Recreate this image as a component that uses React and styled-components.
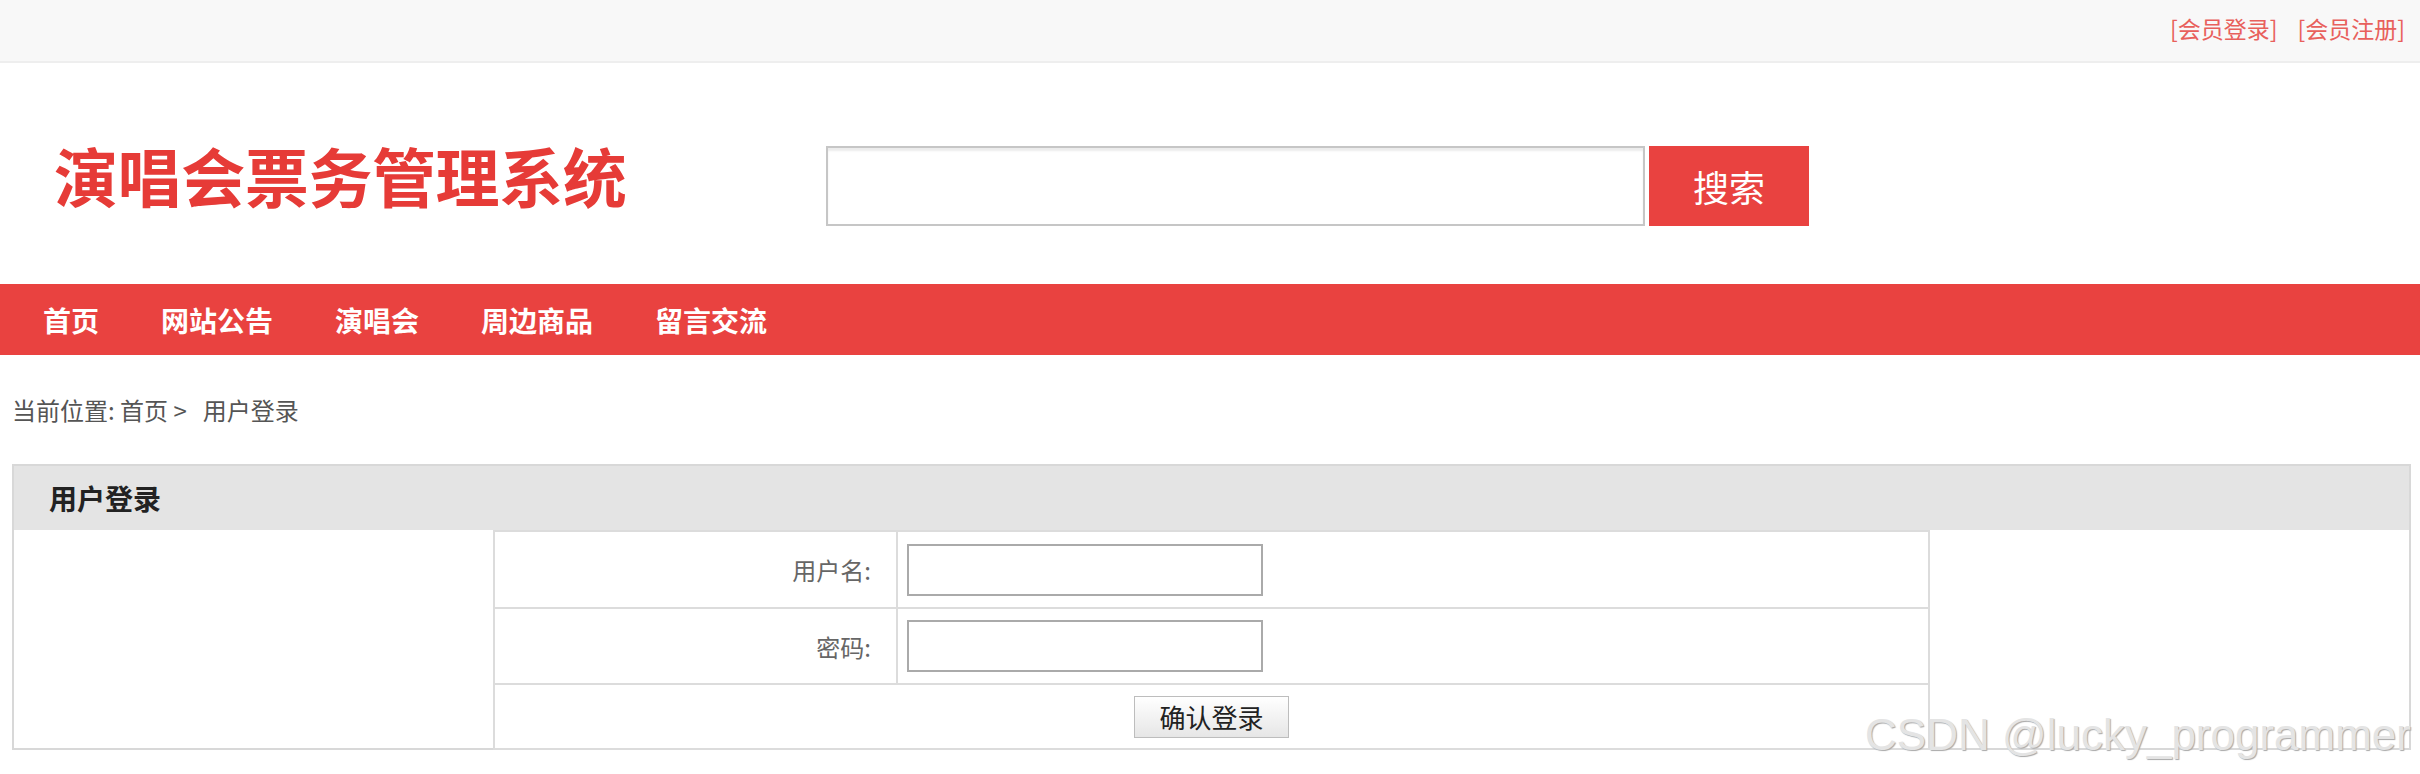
import React from "react";
import styled, { createGlobalStyle } from "styled-components";

const GlobalStyle = createGlobalStyle`
  body {
    margin: 0;
    background: #fff;
    font-family: "Noto Sans CJK SC", "Noto Sans", sans-serif;
  }
`;

const navItems = ["首页", "网站公告", "演唱会", "周边商品", "留言交流"];

const Page = styled.div`
  position: relative;
  min-height: 774px;
`;

const TopBar = styled.div`
  height: 63px;
  padding: 0 15px 4px 0;
  box-sizing: border-box;
  border-bottom: 2px solid #eeeeee;
  background: #f8f8f8;
  display: flex;
  justify-content: flex-end;
  align-items: center;
  gap: 20px;
`;

const TopLink = styled.a`
  font-size: 23px;
  line-height: 1;
  color: #e8605c;
  text-decoration: none;
`;

const Header = styled.header`
  height: 221px;
  display: flex;
  align-items: center;
  padding-left: 54px;
`;

const Title = styled.h1`
  flex: 0 0 772px;
  margin: 0;
  font-size: 64px;
  line-height: 64px;
  letter-spacing: -0.4px;
  font-weight: 700;
  color: #e63b37;
`;

const SearchForm = styled.form`
  display: flex;
  gap: 4px;
  margin-top: 24px;
`;

const SearchInput = styled.input`
  width: 819px;
  height: 80px;
  box-sizing: border-box;
  border: 2px solid #c6c6c6;
  box-shadow: inset 0 3px 2px #ececec;
  outline: none;
`;

const SearchButton = styled.button`
  width: 160px;
  height: 80px;
  border: none;
  background: #e94240;
  color: #fff;
  font-family: inherit;
  font-size: 36px;
`;

const Nav = styled.nav`
  height: 71px;
  background: #e94240;
  display: flex;
  align-items: center;
  padding-left: 12px;
`;

const NavItem = styled.a`
  padding: 0 31px;
  color: #fff;
  font-size: 28px;
  font-weight: 700;
  text-decoration: none;
`;

const Breadcrumb = styled.div`
  padding: 37px 12px 0;
  font-size: 24px;
  line-height: 36px;
  color: #555;
`;

const Panel = styled.section`
  margin: 36px 9px 0 12px;
  border: 2px solid #d8d8d8;
`;

const PanelHeader = styled.div`
  height: 64px;
  display: flex;
  align-items: center;
  padding-left: 35px;
  background: #e4e4e4;
  font-size: 28px;
  font-weight: 700;
  color: #222;
`;

const FormTable = styled.table`
  width: 60%;
  margin: 0 auto -2px;
  border-collapse: collapse;

  td {
    border: 2px solid #dcdcdc;
  }
`;

const Row = styled.tr`
  height: ${(p) => p.$h}px;
`;

const LabelCell = styled.td`
  width: 375px;
  padding-right: 25px;
  text-align: right;
  font-size: 24px;
  color: #666;
`;

const InputCell = styled.td`
  padding-left: 9px;
`;

const FieldInput = styled.input`
  display: block;
  width: 356px;
  height: 52px;
  box-sizing: border-box;
  border: 2px solid #aaaaaa;
`;

const ActionCell = styled.td`
  text-align: center;
`;

const SubmitButton = styled.button`
  height: 42px;
  padding: 0 24px;
  border: 1px solid #bdbdbd;
  background: linear-gradient(#ffffff, #e6e6e6);
  color: #222;
  font-family: inherit;
  font-size: 26px;
  line-height: 1;
  vertical-align: middle;
`;

const Watermark = styled.div`
  position: absolute;
  right: 9px;
  top: 713px;
  font-family: "Liberation Sans", Arial, sans-serif;
  font-size: 44px;
  line-height: 1;
  color: #e4e4e4;
  text-shadow: 1px 1px 1px #a8a8a8;
  pointer-events: none;
`;

export default function App() {
  return (
    <Page>
      <GlobalStyle />
      <TopBar>
        <TopLink href="#">[会员登录]</TopLink>
        <TopLink href="#">[会员注册]</TopLink>
      </TopBar>

      <Header>
        <Title>演唱会票务管理系统</Title>
        <SearchForm onSubmit={(e) => e.preventDefault()}>
          <SearchInput type="text" />
          <SearchButton type="submit">搜索</SearchButton>
        </SearchForm>
      </Header>

      <Nav>
        {navItems.map((item) => (
          <NavItem key={item} href="#">
            {item}
          </NavItem>
        ))}
      </Nav>

      <Breadcrumb>当前位置: 首页 &gt;&nbsp;&nbsp; 用户登录</Breadcrumb>

      <Panel>
        <PanelHeader>用户登录</PanelHeader>
        <FormTable>
          <tbody>
            <Row $h={77}>
              <LabelCell>用户名:</LabelCell>
              <InputCell>
                <FieldInput type="text" />
              </InputCell>
            </Row>
            <Row $h={76}>
              <LabelCell>密码:</LabelCell>
              <InputCell>
                <FieldInput type="password" />
              </InputCell>
            </Row>
            <Row $h={65}>
              <ActionCell colSpan={2}>
                <SubmitButton type="button">确认登录</SubmitButton>
              </ActionCell>
            </Row>
          </tbody>
        </FormTable>
      </Panel>

      <Watermark>CSDN @lucky_programmer</Watermark>
    </Page>
  );
}
